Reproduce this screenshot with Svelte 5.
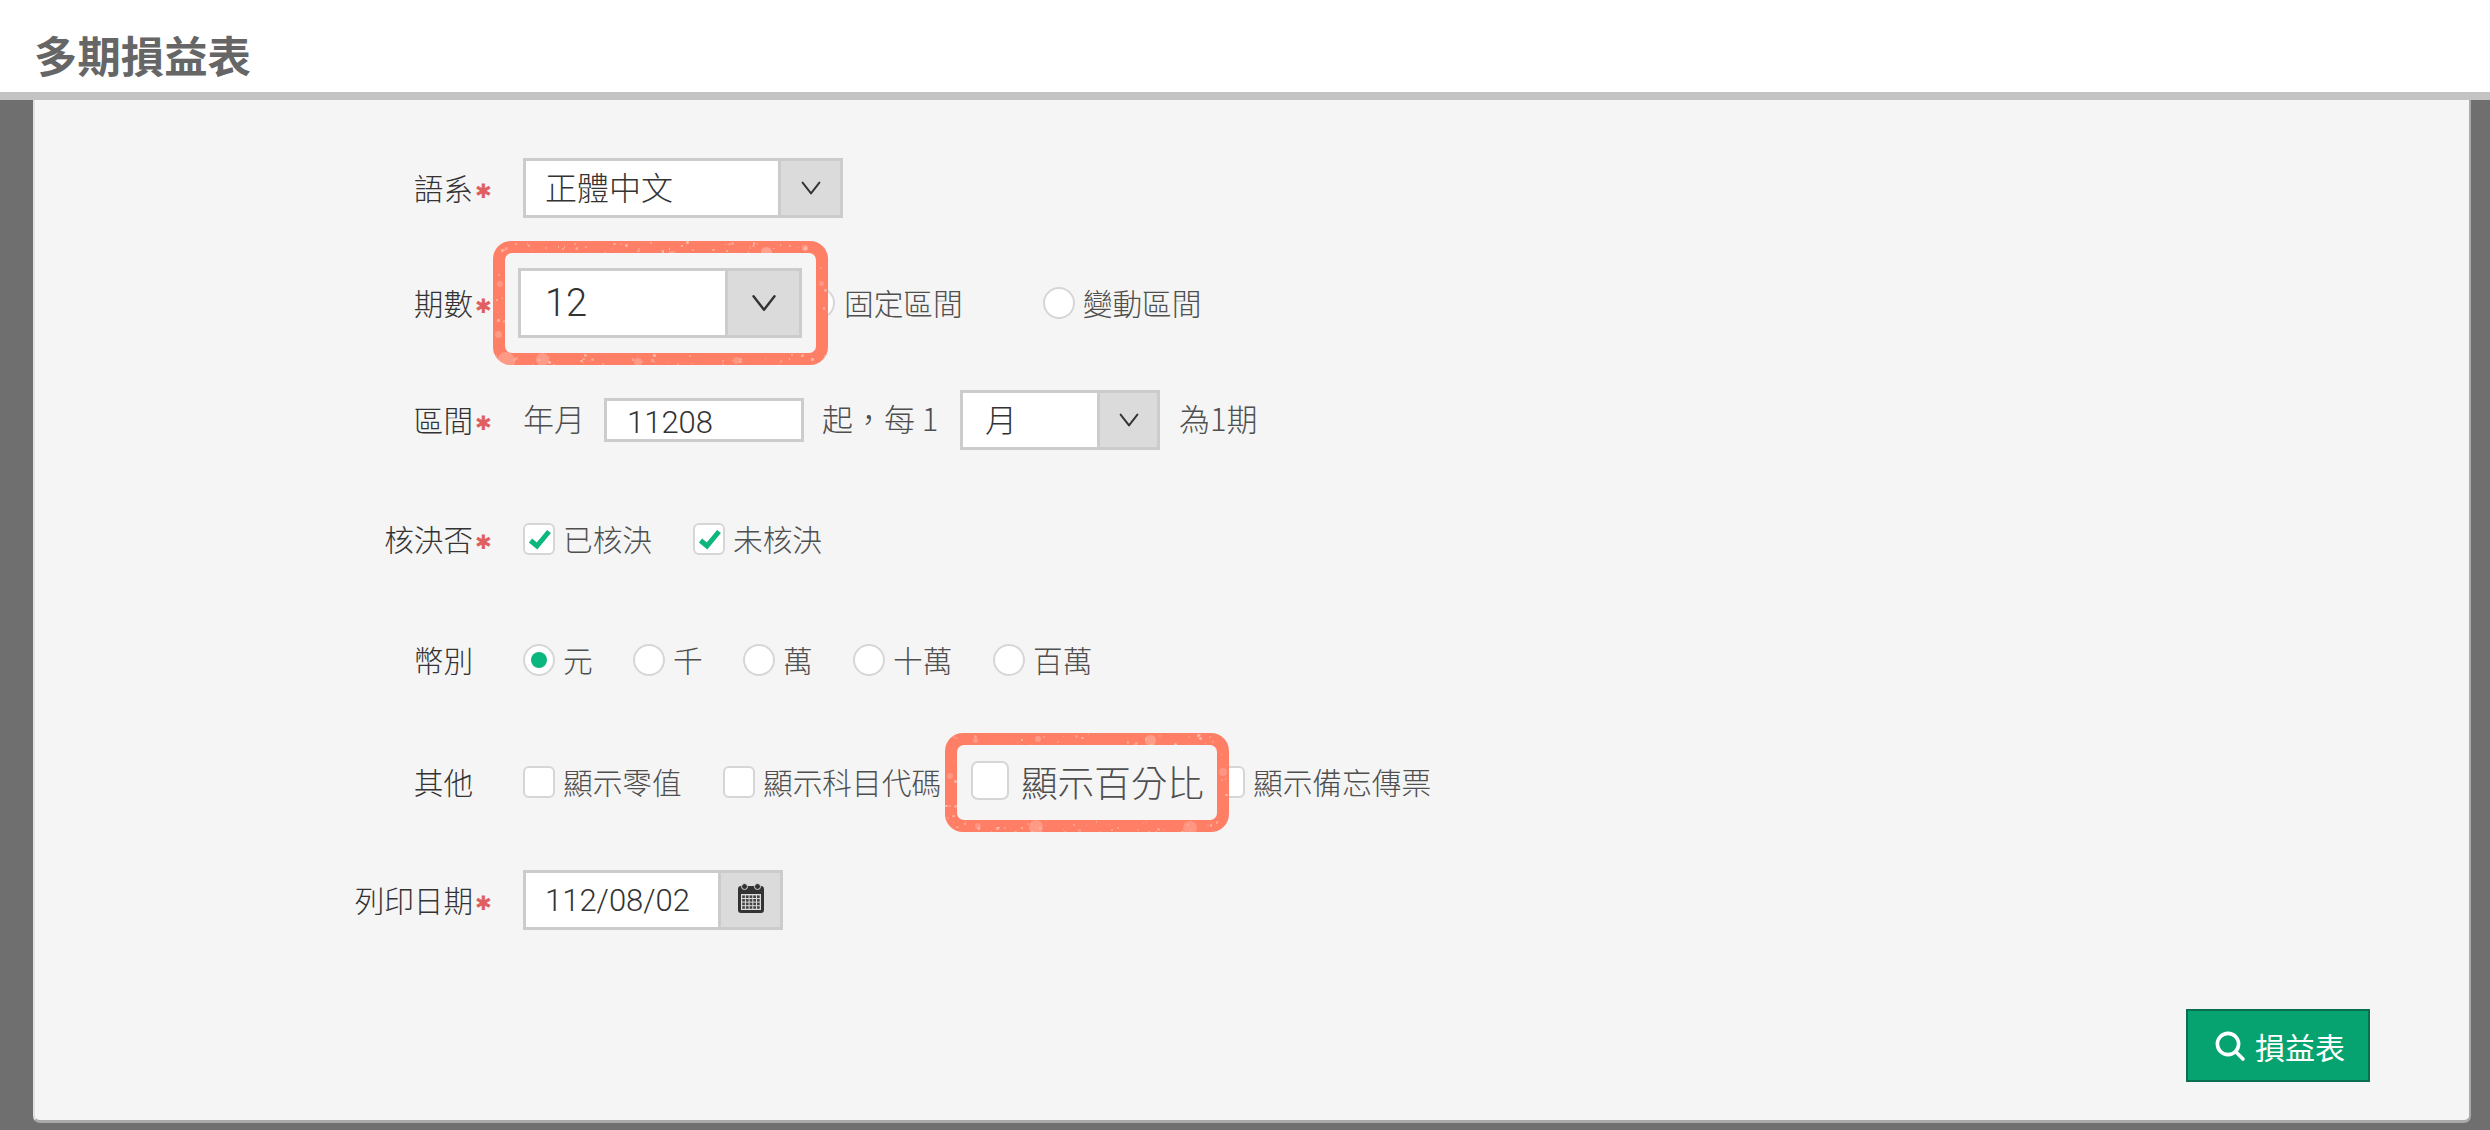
<script>
  const currency = [
    { t: '元', on: true, w: 110 },
    { t: '千', w: 110 },
    { t: '萬', w: 110 },
    { t: '十萬', w: 140 },
    { t: '百萬', w: 110 }
  ];
  const others = [
    { t: '顯示零值', w: 200 },
    { t: '顯示科目代碼', w: 490 },
    { t: '顯示備忘傳票', w: 230 }
  ];

  // Deterministic paint-grain along a callout's frame.
  function grain(w, h, count, seed) {
    let s = seed;
    const rnd = () => {
      s = (s * 16807) % 2147483647;
      return (s - 1) / 2147483646;
    };
    const out = [];
    for (let i = 0; i < count; i++) {
      const onTop = rnd() < 0.5;
      const side = rnd() < 0.12;
      const x = side ? (rnd() < 0.5 ? rnd() * 10 : w - rnd() * 10) : rnd() * w;
      const y = side ? rnd() * h : onTop ? rnd() * 11 : h - rnd() * 11;
      out.push([x.toFixed(1), y.toFixed(1), (1 + rnd() * 2).toFixed(1), (0.35 + rnd() * 0.5).toFixed(2)]);
    }
    return out;
  }
  const blobs1 = [[268,6,11,.5],[309,4,6,.45],[175,10,8,.45],[4,111,18,.4],[43,112,13,.4],[141,117,8,.4],[2,90,7,.4],[4,40,6,.35],[240,116,7,.35],[326,40,5,.4]];
  const blobs2 = [[200,2,11,.45],[90,3,6,.4],[28,5,5,.4],[84,87,14,.4],[238,88,14,.35],[30,90,6,.35],[274,35,8,.35],[2,40,6,.35]];
  const specks1 = [...grain(334, 124, 110, 4711), ...blobs1];
  const specks2 = [...grain(284, 99, 90, 2024), ...blobs2];

  const calCells = [];
  for (let r = 0; r < 4; r++) for (let c = 0; c < 5; c++) calCells.push([4.2 + c * 3.7, 12.4 + r * 3.6]);
</script>

{#snippet chevron(size)}
  <svg class="chev" width={size} height={size} viewBox="0 0 20 20" aria-hidden="true">
    <path d="M3 5.5 L10 14.5 L17 5.5" fill="none" stroke="#333" stroke-width="1.6" stroke-linecap="round" stroke-linejoin="round" />
  </svg>
{/snippet}

{#snippet check()}
  <svg class="tick" width="28" height="28" viewBox="0 0 28 28" aria-hidden="true">
    <path d="M5.5 15.5 L12 21 L24 6.5" fill="none" stroke="#0cb67f" stroke-width="5" />
  </svg>
{/snippet}

{#snippet paint(list)}
  {#each list as s}
    <i class="speck" style="left:{s[0]}px;top:{s[1]}px;width:{s[2]}px;height:{s[2]}px;opacity:{s[3]}"></i>
  {/each}
{/snippet}

<div class="page">
  <header class="head"><h1>多期損益表</h1></header>
  <main class="panel">
    <div class="row r1">
      <div class="lab">語系<span class="star">✱</span></div>
      <div class="select w320"><span class="val">正體中文</span><span class="add">{@render chevron(24)}</span></div>
    </div>

    <div class="row r2">
      <div class="lab">期數<span class="star">✱</span></div>
      <div class="push280"></div>
      <span class="box round"></span><span class="txt gap2">固定區間</span>
      <span class="box round second"></span><span class="txt">變動區間</span>
      <div class="callout c1">
        {@render paint(specks1)}
        <div class="callin">
          <div class="select big"><span class="val">12</span><span class="add">{@render chevron(30)}</span></div>
        </div>
      </div>
    </div>

    <div class="row r3">
      <div class="lab">區間<span class="star">✱</span></div>
      <span class="txt up">年月</span>
      <div class="input">11208</div>
      <span class="txt up every">起，每 1</span>
      <div class="select w200"><span class="val">月</span><span class="add">{@render chevron(24)}</span></div>
      <span class="txt up tail">為1期</span>
    </div>

    <div class="row r4">
      <div class="lab">核決否<span class="star">✱</span></div>
      <label class="opt w170"><span class="box">{@render check()}</span><span class="txt">已核決</span></label>
      <label class="opt"><span class="box">{@render check()}</span><span class="txt">未核決</span></label>
    </div>

    <div class="row r5">
      <div class="lab">幣別</div>
      {#each currency as c}
        <label class="opt" style="width:{c.w}px"><span class="box round">{#if c.on}<span class="dot"></span>{/if}</span><span class="txt">{c.t}</span></label>
      {/each}
    </div>

    <div class="row r6">
      <div class="lab">其他</div>
      {#each others as o}
        <label class="opt" style="width:{o.w}px"><span class="box"></span><span class="txt">{o.t}</span></label>
      {/each}
      <div class="callout c2">
        {@render paint(specks2)}
        <div class="callin">
          <span class="box big"></span><span class="txt bigtxt">顯示百分比</span>
        </div>
      </div>
    </div>

    <div class="row r7">
      <div class="lab">列印日期<span class="star">✱</span></div>
      <div class="select date">
        <span class="val">112/08/02</span>
        <span class="add">
          <svg width="26" height="30" viewBox="0 0 26 30" aria-hidden="true">
            <rect x="0" y="3" width="26" height="27" rx="3" fill="#333" />
            <circle cx="6.5" cy="3.5" r="3" fill="#333" stroke="#dbdbdb" stroke-width="1" />
            <circle cx="19.5" cy="3.5" r="3" fill="#333" stroke="#dbdbdb" stroke-width="1" />
            <rect x="3" y="11" width="20" height="16" fill="#dcdcdc" />
            {#each calCells as c}
              <rect x={c[0]} y={c[1]} width="2.7" height="2.6" fill="#444" />
            {/each}
          </svg>
        </span>
      </div>
    </div>

    <div class="foot">
      <button class="go" type="button">
        <svg width="32" height="32" viewBox="0 0 32 32" aria-hidden="true">
          <circle cx="14" cy="14" r="10.6" fill="none" stroke="#fff" stroke-width="3.6" />
          <path d="M22 22 L29 29" stroke="#fff" stroke-width="3.6" stroke-linecap="round" />
        </svg>
        損益表
      </button>
    </div>
  </main>
</div>

<style>
  :global(body) { margin: 0; background: #6f6f6f; }
  .page {
    width: 2490px; height: 1130px; overflow: hidden; background: #6f6f6f;
    font-family: "Noto Sans CJK TC", "Noto Sans", sans-serif; color: #444;
  }
  .head {
    height: 92px; background: #fff; border-bottom: 8px solid #c3c3c3; box-sizing: content-box;
    display: flex; align-items: center; padding-left: 34px;
  }
  h1 { margin: 0; font-size: 43.4px; line-height: 1; font-weight: 700; color: #666; position: relative; top: 9px; }
  .panel {
    position: relative; margin-left: 33px; width: 2438px; height: 1023px; box-sizing: border-box;
    background: #f5f5f5; border-bottom: 3px solid #aaa; border-right: 2px solid #aaa; border-left: 2px solid #e0e0e0;
    border-radius: 0 0 7px 7px; padding-top: 58px;
  }
  .row { position: relative; display: flex; align-items: center; height: 60px; }
  .r2 { margin-top: 55px; } .r3 { margin-top: 57px; } .r4 { margin-top: 59px; }
  .r5 { margin-top: 61px; } .r6 { margin-top: 62px; } .r7 { margin-top: 58px; }
  .lab {
    position: relative; width: 438px; margin-right: 50px; text-align: right; flex: none;
    font-size: 29.6px; font-weight: 300; color: #333; line-height: 1;
  }
  .star { position: absolute; left: 440px; top: 8px; color: #e05f5f; font: 700 20px/1 "DejaVu Sans", sans-serif; }
  .select {
    display: flex; align-items: stretch; height: 60px; box-sizing: border-box; border: 3px solid #ccc;
    background: #fff; flex: none;
  }
  .w320 { width: 320px; }
  .w200 { width: 200px; }
  .val {
    flex: 1; display: flex; align-items: center; padding: 0 0 4px 19px; font-size: 32px; font-weight: 300;
    color: #333; line-height: 1; white-space: nowrap;
  }
  .w200 .val { padding-left: 22px; }
  .add {
    display: flex; align-items: center; justify-content: center; background: #dbdbdb; border-left: 3px solid #ccc;
    width: 62px; flex: none; box-sizing: border-box;
  }
  .w200 .add { width: 60px; }
  .big { width: 284px; height: 70px; }
  .big .val { font-family: Roboto, "Liberation Sans", sans-serif; font-size: 38px; padding: 0 0 0 24px; }
  .big .add { width: 74px; }
  .date { width: 260px; }
  .date .val { font-family: Roboto, "Liberation Sans", sans-serif; font-size: 31px; padding: 0 0 0 19px; }
  .date .add { padding-bottom: 4px; }
  .txt { font-size: 29.7px; font-weight: 300; color: #4f4f4f; line-height: 1; white-space: nowrap; }
  .box {
    display: inline-flex; align-items: center; justify-content: center; flex: none; width: 32px; height: 32px;
    box-sizing: border-box; background: #fff; border: 2.5px solid #d6d6d6; border-radius: 6px; overflow: hidden;
  }
  .round { border-radius: 50%; }
  .opt { display: flex; align-items: center; gap: 8px; flex: none; }
  .w170 { width: 170px; }
  .dot { width: 16px; height: 16px; border-radius: 50%; background: #0cb67f; }
  .push280 { width: 280px; flex: none; }
  .gap2 { margin-left: 9px; }
  .second { margin-left: 80px; margin-right: 8px; }
  .up { position: relative; top: -3px; font-size: 31px; }
  .input {
    flex: none; width: 200px; height: 44px; box-sizing: border-box; margin-left: 19px; border: 3px solid #ccc; background: #fff;
    font: 300 31px/1 Roboto, "Liberation Sans", sans-serif; color: #333; display: flex; align-items: center; padding: 4px 0 0 20px;
  }
  .every { margin-left: 18px; width: 138px; flex: none; }
  .tail { margin-left: 19px; }
  .callout {
    position: absolute; box-sizing: border-box; background: #ff7f66; border-radius: 18px; overflow: hidden; padding: 12px;
  }
  .c1 { left: 458px; top: -32px; width: 335px; height: 124px; }
  .c2 { left: 910px; top: -19px; width: 284px; height: 99px; }
  .callin {
    height: 100%; box-sizing: border-box; background: #f5f5f5; border-radius: 7px; position: relative; z-index: 1;
    display: flex; align-items: center;
  }
  .c1 .callin { padding: 0 14px 0 13px; }
  .c2 .callin { padding-left: 14px; padding-bottom: 4px; }
  .speck { position: absolute; border-radius: 50%; background: #ffc4b6; }
  .box.big { width: 38px; height: 39px; border-radius: 7px; }
  .bigtxt { font-size: 36.6px; margin-left: 12px; position: relative; top: 2px; }
  .foot { position: absolute; left: 2151px; top: 909px; }
  .go {
    width: 184px; height: 73px; box-sizing: border-box; padding: 0 0 0 3px; background: #06a370; border: 2px solid #0a6e50; color: #fff;
    font: 400 30px/1 "Noto Sans CJK TC", sans-serif; display: flex; align-items: center; justify-content: center; gap: 9px;
  }
</style>
